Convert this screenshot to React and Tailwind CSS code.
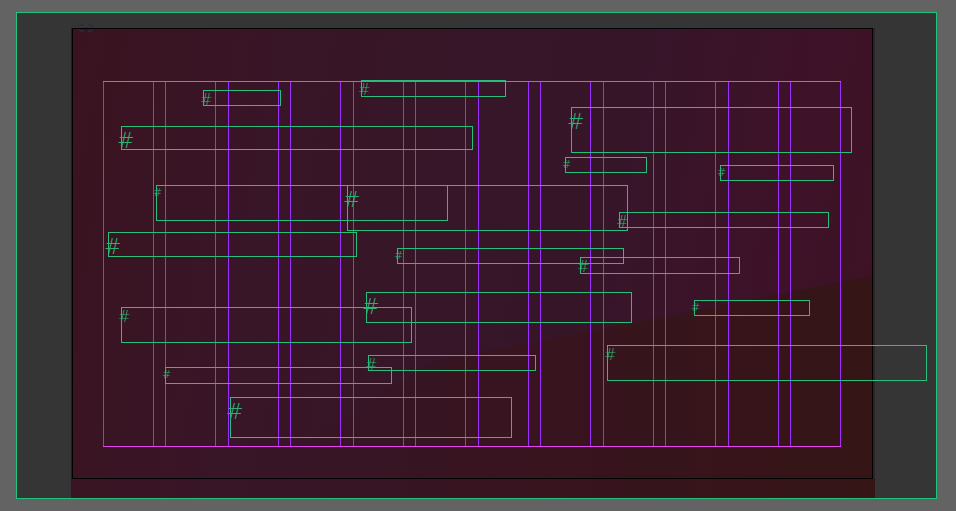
import React from "react";

const GLYPH = {
  L: "absolute -left-[5px] top-[4px] text-[21px]",
  M: "absolute -left-[4px] top-[2px] text-[15px]",
  S: "absolute -left-[4px] top-[1px] text-[11px]",
};

// x1, y1, x2, y2 in page coords, glyph size
const BOXES = [
  [203, 90, 280, 105, "M"],
  [361, 80, 505, 96, "M"],
  [121, 126, 472, 149, "L"],
  [571, 107, 851, 152, "L"],
  [565, 157, 646, 172, "S"],
  [720, 165, 833, 180, "S"],
  [156, 185, 447, 220, "S"],
  [347, 185, 627, 230, "L"],
  [108, 232, 356, 256, "L"],
  [619, 212, 828, 227, "M"],
  [397, 248, 623, 263, "S"],
  [580, 257, 739, 273, "M"],
  [366, 292, 631, 322, "L"],
  [121, 307, 411, 342, "M"],
  [694, 300, 809, 315, "S"],
  [607, 345, 926, 380, "M"],
  [368, 355, 535, 370, "M"],
  [165, 367, 391, 383, "S"],
  [230, 397, 511, 437, "L"],
];

function LinkIcon() {
  return (
    <svg width="16" height="8" viewBox="0 0 16 8" className="absolute left-[7px] -top-[4px]">
      <path d="M6 1H3.5a2.5 3 0 0 0 0 6H6" fill="none" stroke="#28323a" strokeWidth="1.3" />
      <path d="M10 1h2.5a2.5 3 0 0 1 0 6H10" fill="none" stroke="#28323a" strokeWidth="1.3" />
      <path d="M4.5 4h7" stroke="#28323a" strokeWidth="1.3" />
    </svg>
  );
}

export default function App() {
  return (
    <div className="w-[956px] h-[511px] bg-[#636363] pt-[12px] pl-[16px] overflow-hidden font-['DejaVu_Sans',sans-serif]">
      <div className="w-[921px] h-[487px] border border-[#1fc47a] bg-[#353535] pl-[54px] pt-[15px]">
        <div className="relative w-[804px] h-[470px] bg-[linear-gradient(100deg,#3b1320_0%,#381527_25%,#361628_45%,#371529_65%,#3e1229_85%,#3c1322_100%)]">
          <svg className="absolute inset-0" width="804" height="470" viewBox="0 0 804 470">
            <defs>
              <linearGradient id="wedge" x1="0" y1="0" x2="1" y2="0">
                <stop offset="0" stopColor="#371422" stopOpacity="0" />
                <stop offset="0.35" stopColor="#381420" stopOpacity="0.9" />
                <stop offset="1" stopColor="#351516" stopOpacity="1" />
              </linearGradient>
            </defs>
            <polygon points="359,334 804,247 804,470 150,470" fill="url(#wedge)" />
          </svg>
          <LinkIcon />
          <div className="absolute right-0 top-0 w-[3px] h-[451px] bg-[#2c2426]" />
          <div className="relative ml-[1px] w-[801px] h-[451px] border border-black pl-[29.9px] pt-[52px]">
            <div className="w-[738.5px] h-[366px] border-y border-[#e544f0] grid grid-cols-[repeat(12,51px)] gap-x-[11.5px]">
              {Array.from({ length: 12 }).map((_, i) => (
                <div key={i} className="border-x border-[#9d2cff]" />
              ))}
            </div>
            {BOXES.map(([x1, y1, x2, y2, s], i) => (
              <div
                key={i}
                className="absolute border border-[#27bf7a]"
                style={{ left: x1 - 73, top: y1 - 29, width: x2 - x1 + 1, height: y2 - y1 + 1 }}
              >
                <span className={GLYPH[s] + " leading-none font-light text-[#2fae73]"}>#</span>
              </div>
            ))}
          </div>
        </div>
      </div>
    </div>
  );
}
